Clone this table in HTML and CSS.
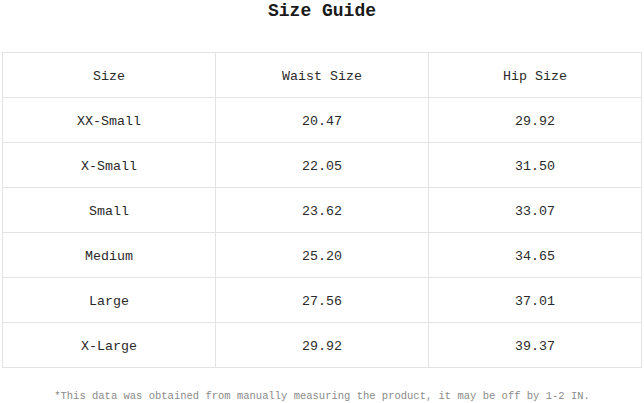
FILE: index.html
```html
<!DOCTYPE html>
<html>
<head>
<meta charset="utf-8">
<link rel="stylesheet" href="styles.css">
</head>
<body>
<div class="page">
  <h1 class="title">Size Guide</h1>
  <table class="guide">
    <thead>
      <tr><th>Size</th><th>Waist Size</th><th>Hip Size</th></tr>
    </thead>
    <tbody>
      <tr><td>XX-Small</td><td>20.47</td><td>29.92</td></tr>
      <tr><td>X-Small</td><td>22.05</td><td>31.50</td></tr>
      <tr><td>Small</td><td>23.62</td><td>33.07</td></tr>
      <tr><td>Medium</td><td>25.20</td><td>34.65</td></tr>
      <tr><td>Large</td><td>27.56</td><td>37.01</td></tr>
      <tr><td>X-Large</td><td>29.92</td><td>39.37</td></tr>
    </tbody>
  </table>
  <p class="note">*This data was obtained from manually measuring the product, it may be off by 1-2 IN.</p>
</div>
</body>
</html>
```
FILE: styles.css
```css
html, body {
  margin: 0;
  padding: 0;
  background: #ffffff;
}
.page {
  width: 644px;
  font-family: "Liberation Mono", "DejaVu Sans Mono", monospace;
  color: #222;
}
.title {
  margin: 0;
  height: 52px;
  padding-top: 0;
  text-align: center;
  font-size: 18px;
  font-weight: bold;
  line-height: 22px;
  color: #1a1a1a;
}
.guide {
  margin-left: 2px;
  width: 640px;
  border-collapse: collapse;
  table-layout: fixed;
}
.guide th,
.guide td {
  border: 1px solid #e3e3e3;
  height: 44px;
  padding: 2px 0 0;
  box-sizing: border-box;
  text-align: center;
  vertical-align: middle;
  font-size: 13.3px;
  font-weight: normal;
  color: #2a2a2a;
}
.guide th,
.guide td {
  height: 45px;
}
.note {
  margin: 21px 0 0;
  text-align: center;
  font-size: 10.5px;
  line-height: 14px;
  color: #8a8a8a;
}
```
